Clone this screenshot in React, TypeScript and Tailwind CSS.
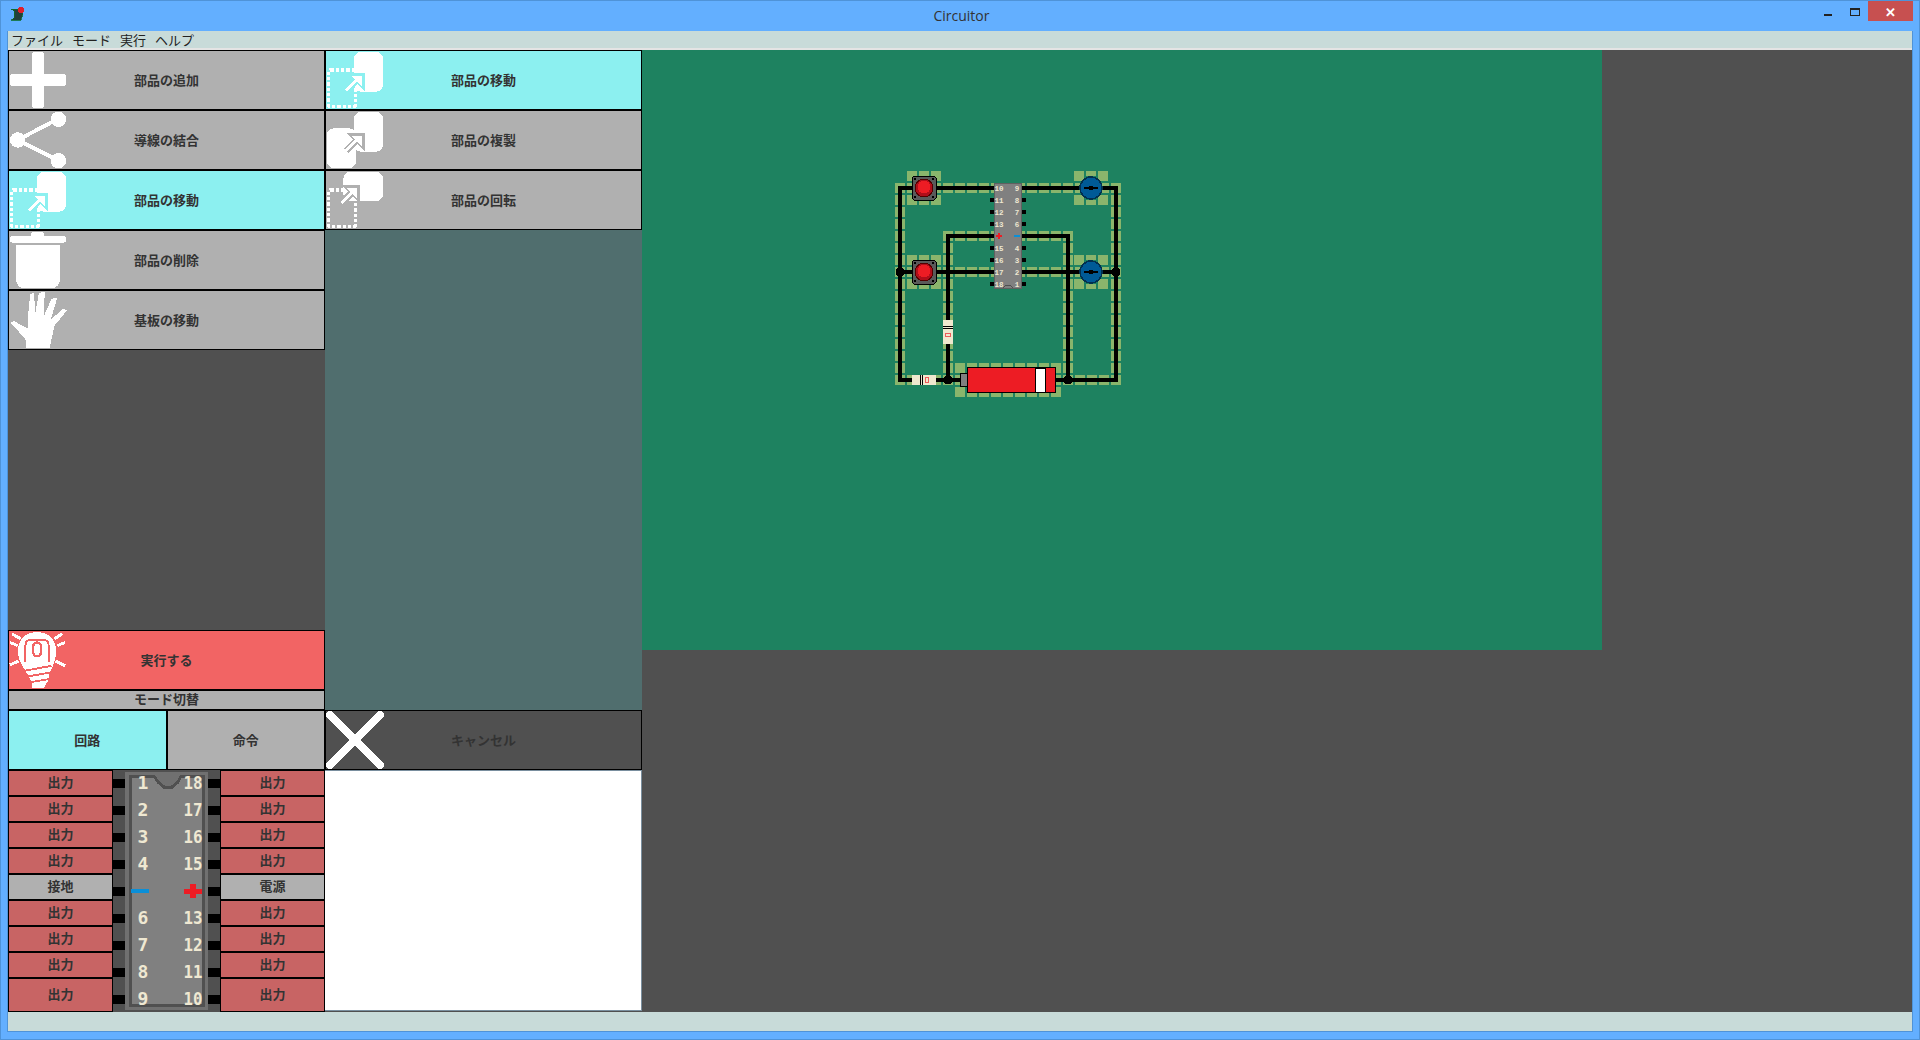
const FONT = "font-['Noto_Sans_CJK_JP','Noto_Sans',sans-serif]";

function Arrow({ bg, dx = 0, dy = 0 }: { bg: string; dx?: number; dy?: number }) {
  return (
    <g transform={`translate(${dx} ${dy})`}>
      <path d="M21 41 L33 29" stroke={bg} strokeWidth="7" fill="none" />
      <path d="M25 24 H39 V38 Z" fill={bg} stroke={bg} strokeWidth="3" />
      <path d="M21 41 L33 29" stroke="#fff" strokeWidth="3" fill="none" />
      <path d="M27 26 H37 V36 Z" fill="#fff" />
    </g>
  );
}

function Dotted() {
  return (
    <rect x="2.5" y="19.5" width="28" height="38" rx="2" fill="none" stroke="#fff" strokeWidth="3.5" strokeDasharray="3.5 2" />
  );
}

function Icon({ name, bg }: { name: string; bg: string }) {
  let body = null;
  if (name === 'plus') {
    body = (
      <>
        <rect x="24" y="1" width="12" height="58" rx="2" fill="#fff" />
        <rect x="1" y="24" width="58" height="12" rx="2" fill="#fff" />
      </>
    );
  } else if (name === 'share') {
    body = (
      <>
        <path d="M9 30 L51 8 M9 30 L51 51" stroke="#fff" strokeWidth="4" />
        <circle cx="51" cy="8.5" r="8" fill="#fff" />
        <circle cx="9" cy="30" r="8" fill="#fff" />
        <circle cx="51" cy="51.5" r="8" fill="#fff" />
      </>
    );
  } else if (name === 'move') {
    body = (
      <>
        <rect x="29" y="1" width="30" height="41" rx="7" fill="#fff" />
        <Dotted />
        <Arrow bg={bg} />
      </>
    );
  } else if (name === 'copy') {
    body = (
      <>
        <rect x="29" y="1" width="30" height="41" rx="7" fill="#fff" />
        <rect x="1" y="18" width="30" height="41" rx="7" fill="#fff" />
        <Arrow bg={bg} />
      </>
    );
  } else if (name === 'rotate') {
    body = (
      <>
        <rect x="18" y="1" width="41" height="30" rx="7" fill="#fff" />
        <Dotted />
        <Arrow bg={bg} dx={-5} dy={-8} />
      </>
    );
  } else if (name === 'trash') {
    body = (
      <>
        <rect x="23" y="1" width="13" height="6" rx="2" fill="#fff" />
        <rect x="1" y="5" width="58" height="7" rx="3" fill="#fff" />
        <path d="M7 14 H53 V48 Q53 59 44 59 H16 Q7 59 7 48 Z" fill="#fff" />
      </>
    );
  } else if (name === 'hand') {
    body = (
      <path d="M18 59 L17 50 L10 42 L1 33 L5 31 L14 36 L20 39 L20 22 L22 3 L26 2 L27 24 L31 2 L37 1 L36 26 L44 8 L50 7 L43 30 L56 18 L60 20 L47 36 L44 50 L42 59 Z" fill="#fff" />
    );
  } else if (name === 'bulb') {
    body = (
      <>
        <path d="M24 59 L23 52 L17 41 Q9 30 9 20 Q11 2 29 1 Q47 2 49 20 Q49 30 43 41 L40 52 L36 59 Z" fill="#fff" />
        <path d="M17 32 V15 Q17 9 23 9 H35 Q41 9 41 15 V32" fill="none" stroke={bg} strokeWidth="2" />
        <rect x="25" y="12" width="8" height="14" rx="4" fill="none" stroke={bg} strokeWidth="2.5" />
        <path d="M17 41 L44 36 M20 47 L42 43 M22 53 L40 50" stroke={bg} strokeWidth="2" />
        <path d="M3 3 L12 8 M1 12 L9 15 M1 35 L10 31 M47 8 L55 3 M50 15 L58 12 M48 31 L58 36" stroke="#fff" strokeWidth="3" />
      </>
    );
  } else if (name === 'cancel') {
    body = <path d="M4 4 L56 56 M56 4 L4 56" stroke="#fff" strokeWidth="8" strokeLinecap="round" />;
  }
  return (
    <svg viewBox="0 0 60 60" className="w-[58px] h-[58px] block" shapeRendering="crispEdges">
      {body}
    </svg>
  );
}

function ActionButton({ icon, label, bg }: { icon: string; label: string; bg: string }) {
  return (
    <div className="grid grid-cols-[58px_1fr_58px] items-center h-[60px] shrink-0 border border-black text-[#333]" style={{ background: bg }}>
      <Icon name={icon} bg={bg} />
      <span className="text-center text-[13px] font-bold leading-none pb-[2px]">{label}</span>
      <span />
    </div>
  );
}

function PinRow({ label, last, power }: { label: string; last?: boolean; power?: boolean }) {
  return (
    <div className={`flex items-center justify-center border border-black pb-[3px] text-[13px] font-bold leading-none text-[#333] ${last ? 'h-[34px]' : 'h-[26px]'} ${power ? 'bg-[#b0b0b0]' : 'bg-[#c86464]'}`}>
      {label}
    </div>
  );
}

const GRAY = '#b0b0b0';
const CYAN = '#8cf0f0';
const leftPins = ['出力', '出力', '出力', '出力', '接地', '出力', '出力', '出力', '出力'];
const rightPins = ['出力', '出力', '出力', '出力', '電源', '出力', '出力', '出力', '出力'];

function ChipDrawing() {
  const left = ['1', '2', '3', '4', '', '6', '7', '8', '9'];
  const right = ['18', '17', '16', '15', '', '13', '12', '11', '10'];
  return (
    <svg viewBox="113 770 107 242" className="w-[107px] h-[242px] block bg-[#505050]" shapeRendering="crispEdges">
      {left.map((_, i) => (
        <g key={i}>
          <rect x="113" y={779 + i * 27} width="12" height="9" fill="#000" />
          <rect x="208" y={779 + i * 27} width="12" height="9" fill="#000" />
        </g>
      ))}
      <rect x="125" y="772" width="83" height="238" fill="#707070" />
      <path d="M130 776 H154 L158 782 L164 787 H172 L178 782 L181 776 H203 V1005 H130 Z" fill="#808080" stroke="#505050" strokeWidth="3" />
      {left.map((n, i) => (
        <text key={n + i} x="143" y={789 + i * 27} textAnchor="middle" fontFamily="'DejaVu Sans Mono', monospace" fontWeight="700" fontSize="18" fill="#efe8d2">{n}</text>
      ))}
      {right.map((n, i) => (
        <text key={n + i} x="193" y={789 + i * 27} textAnchor="middle" fontFamily="'DejaVu Sans Mono', monospace" fontWeight="700" fontSize="18" fill="#efe8d2" textLength={n ? 19 : undefined} lengthAdjust="spacingAndGlyphs">{n}</text>
      ))}
      <rect x="131" y="889" width="18" height="4" fill="#0a8fd8" />
      <rect x="184" y="889" width="18" height="5" fill="#ed1c24" />
      <rect x="190" y="884" width="6" height="14" fill="#ed1c24" />
    </svg>
  );
}

function Track({ d }: { d: string }) {
  return <path d={d} stroke="#8ab56c" strokeWidth="10" strokeDasharray="10 2" fill="none" />;
}

function PushButton({ cx, cy }: { cx: number; cy: number }) {
  return (
    <g>
      <path d={`M${cx - 10} ${cy - 12} h20 l2 2 v20 l-2 2 h-20 l-2 -2 v-20 z`} fill="#5a5a5a" stroke="#000" />
      <circle cx={cx} cy={cy} r="9" fill="#b00e1a" stroke="#500" />
      <circle cx={cx} cy={cy - 1} r="6.5" fill="#ed1c24" />
      {[[-9, -9], [9, -9], [-9, 9], [9, 9]].map(([x, y]) => (
        <rect key={`${x}${y}`} x={cx + x - 1} y={cy + y - 1} width="2" height="2" fill="#000" />
      ))}
    </g>
  );
}

function Lamp({ cx, cy }: { cx: number; cy: number }) {
  return (
    <g>
      <circle cx={cx} cy={cy} r="11" fill="#005a96" stroke="#02304f" strokeWidth="1.5" />
      <path d={`M${cx - 7} ${cy} h14`} stroke="#000" strokeWidth="2" />
      <circle cx={cx} cy={cy} r="2.5" fill="#000" />
    </g>
  );
}

// three tiles above and below a part, with the corner tiles taller
function Pads({ cx, cy }: { cx: number; cy: number }) {
  return (
    <g fill="#8ab56c">
      {[-17, -5, 7].map(x => (
        <g key={x}>
          <rect x={cx + x} y={cy - 17} width="10" height="5" />
          <rect x={cx + x} y={cy + 12} width="10" height="5" />
        </g>
      ))}
      <rect x={cx - 17} y={cy - 17} width="10" height="10" />
      <rect x={cx + 7} y={cy - 17} width="10" height="10" />
      <rect x={cx - 17} y={cy + 7} width="10" height="10" />
      <rect x={cx + 7} y={cy + 7} width="10" height="10" />
    </g>
  );
}

function Circuit() {
  const icLeft = ['10', '11', '12', '13', '', '15', '16', '17', '18'];
  const icRight = ['9', '8', '7', '6', '', '4', '3', '2', '1'];
  const pinYs = [188, 200, 212, 224, 236, 248, 260, 272, 284];
  return (
    <svg viewBox="642 50 960 600" className="w-[960px] h-[600px] block" shapeRendering="crispEdges">
      <Track d="M895 188 H1121" />
      <Track d="M895 272 H1121" />
      <Track d="M895 380 H1121" />
      <Track d="M900 183 V385" />
      <Track d="M1116 183 V385" />
      <Track d="M948 231 V385" />
      <Track d="M1068 231 V385" />
      <Track d="M943 236 H1073" />
      <Pads cx={924} cy={188} />
      <Pads cx={924} cy={272} />
      <Pads cx={1091} cy={188} />
      <Pads cx={1091} cy={272} />
      <g fill="#8ab56c">
        <path d="M955 365.5 H1061 M955 394 H1061" stroke="#8ab56c" strokeWidth="5" strokeDasharray="10 2" />
        <rect x="955" y="363" width="10" height="10" />
        <rect x="1051" y="363" width="10" height="10" />
        <rect x="955" y="387" width="10" height="10" />
        <rect x="1051" y="387" width="10" height="10" />
      </g>
      <path d="M900 188 H1116 V380 H900 Z M900 272 H1116 M948 380 V236 H1068 V380" fill="none" stroke="#000" strokeWidth="4" />
      <circle cx="900" cy="272" r="4.5" fill="#000" />
      <circle cx="1116" cy="272" r="4.5" fill="#000" />
      <circle cx="948" cy="380" r="4.5" fill="#000" />
      <circle cx="1068" cy="380" r="4.5" fill="#000" />
      <PushButton cx={924} cy={188} />
      <PushButton cx={924} cy={272} />
      <Lamp cx={1091} cy={188} />
      <Lamp cx={1091} cy={272} />
      {pinYs.map(y => (
        <g key={y} fill="#000">
          <rect x="990" y={y - 2} width="5" height="4" />
          <rect x="1021" y={y - 2} width="5" height="4" />
        </g>
      ))}
      <rect x="994.5" y="183.5" width="27" height="105" fill="#808080" stroke="#606060" />
      <path d="M1003 288 q5 -6 10 0" fill="none" stroke="#505050" />
      {pinYs.map((y, i) => (
        <g key={y} fontFamily="'Liberation Mono', monospace" fontSize="7.5" fontWeight="700" fill="#efe8d2">
          <text x="999" y={y + 2.5} textAnchor="middle">{icLeft[i]}</text>
          <text x="1017" y={y + 2.5} textAnchor="middle">{icRight[i]}</text>
        </g>
      ))}
      <rect x="996" y="235" width="6" height="2" fill="#ed1c24" />
      <rect x="998" y="233" width="2" height="6" fill="#ed1c24" />
      <rect x="1014" y="235" width="6" height="2" fill="#0a8fd8" />

      <rect x="943" y="320" width="10" height="24" fill="#efe8cf" />
      <path d="M943 326 h10 M943 328 h10" stroke="#000" />
      <rect x="945.5" y="333.5" width="5" height="3" fill="none" stroke="#ed5a5a" />
      <rect x="912" y="375" width="24" height="10" fill="#efe8cf" />
      <path d="M920 375 v10 M922 375 v10" stroke="#000" />
      <rect x="925" y="377.5" width="3" height="5" fill="none" stroke="#ed5a5a" />

      <rect x="960.5" y="373.5" width="7" height="13" fill="#808080" stroke="#000" />
      <rect x="967.5" y="367.5" width="88" height="25" fill="#ed1c24" stroke="#000" />
      <rect x="1035" y="368" width="10" height="24" fill="#fff" stroke="#000" />
    </svg>
  );
}

export default function App() {
  return (
    <div className={`w-[1920px] h-[1040px] flex flex-col overflow-hidden bg-[#63afff] border border-[#4f93d8] ${FONT}`}>
      <div className="h-[30px] shrink-0 grid grid-cols-[1fr_auto_1fr] items-center pl-[9px] pr-[6px]">
        <svg viewBox="0 0 16 16" className="w-4 h-4 block mb-[4px]" shapeRendering="crispEdges">
          <path d="M1 3 H10 L13 8 L11 14 H1 L4 12 V5 Z" fill="#23403a" stroke="#0b6e2c" strokeWidth="0.8" />
          <circle cx="11" cy="4" r="3" fill="#e0202c" />
        </svg>
        <span className="text-[14px] leading-none text-[#333] font-['Open_Sans',sans-serif]">Circuitor</span>
        <div className="flex justify-end self-start">
          <div className="w-[8px] h-[2px] bg-[#222] mt-[13px] mr-[18px]" />
          <div className="w-[10px] h-[8px] border border-t-2 border-[#222] mt-[7px] mr-[8px]" />
          <div className="w-[45px] h-[20px] bg-[#c75050] flex items-center justify-center text-white text-[13px] font-bold leading-none">✕</div>
        </div>
      </div>

      <div className="flex-1 min-h-0 mx-[6px] flex flex-col border-x border-[#4f93d8]">
        <div className="h-[19px] shrink-0 bg-[#c8dbd9] border-b-2 border-[#e4e4e4] flex items-center pl-[3px] pb-[1px] gap-[9px] text-[13px] leading-none text-[#222]">
          <span>ファイル</span>
          <span>モード</span>
          <span>実行</span>
          <span>ヘルプ</span>
        </div>

        <div className="flex-1 min-h-0 flex bg-[#505050]">
          <div className="w-[317px] shrink-0 flex flex-col">
            <ActionButton icon="plus" label="部品の追加" bg={GRAY} />
            <ActionButton icon="share" label="導線の結合" bg={GRAY} />
            <ActionButton icon="move" label="部品の移動" bg={CYAN} />
            <ActionButton icon="trash" label="部品の削除" bg={GRAY} />
            <ActionButton icon="hand" label="基板の移動" bg={GRAY} />
            <div className="flex-1" />
            <ActionButton icon="bulb" label="実行する" bg="#f26464" />
            <div className="h-[20px] shrink-0 border border-black bg-[#b0b0b0] flex items-center justify-center pb-[3px] text-[13px] font-bold leading-none text-[#333]">モード切替</div>
            <div className="h-[60px] shrink-0 grid grid-cols-2 text-[13px] font-bold leading-none text-[#333]">
              <div className="border border-black bg-[#8cf0f0] flex items-center justify-center pb-[2px]">回路</div>
              <div className="border border-black bg-[#b0b0b0] flex items-center justify-center pb-[2px]">命令</div>
            </div>
            <div className="h-[242px] shrink-0 grid grid-cols-[105px_107px_105px]">
              <div className="flex flex-col">
                {leftPins.map((p, i) => <PinRow key={i} label={p} last={i === 8} power={p !== '出力'} />)}
              </div>
              <ChipDrawing />
              <div className="flex flex-col">
                {rightPins.map((p, i) => <PinRow key={i} label={p} last={i === 8} power={p !== '出力'} />)}
              </div>
            </div>
          </div>

          <div className="w-[317px] shrink-0 flex flex-col bg-[#506e6e]">
            <ActionButton icon="move" label="部品の移動" bg={CYAN} />
            <ActionButton icon="copy" label="部品の複製" bg={GRAY} />
            <ActionButton icon="rotate" label="部品の回転" bg={GRAY} />
            <div className="flex-1" />
            <ActionButton icon="cancel" label="キャンセル" bg="#505050" />
            <div className="h-[242px] shrink-0 bg-[#505050] pb-[1px]">
              <div className="h-[241px] bg-white border border-l-0 border-[#7a8f9f]" />
            </div>
          </div>

          <div className="flex-1 min-w-0">
            <div className="bg-[#1e8260] w-[960px] h-[600px]">
              <Circuit />
            </div>
          </div>
        </div>

        <div className="h-[20px] shrink-0 bg-[#c8dbd9] border-b border-[#4f93d8]" />
      </div>
      <div className="h-[7px] shrink-0" />
    </div>
  );
}
